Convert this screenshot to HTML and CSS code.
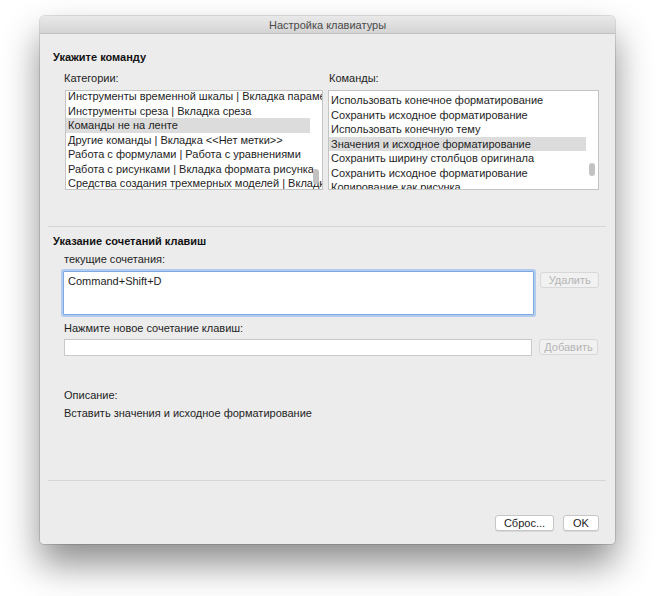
FILE: index.html
```html
<html>
<head>
	<title>Настройка клавиатуры</title>
	<meta charset="utf-8">
	<link rel="stylesheet" href="styles.css">
</head>
<body>
	<div class="window">
		<div class="titlebar">Настройка клавиатуры</div>
		<div class="content">
			<h2 class="group-title">Укажите команду</h2>
			<div class="lists">
				<div class="col col-cat">
					<div class="label">Категории:</div>
					<div class="listbox">
						<ul class="items items-cat">
							<li>Инструменты временной шкалы | Вкладка параметров</li>
							<li>Инструменты среза | Вкладка среза</li>
							<li class="selected">Команды не на ленте</li>
							<li>Другие команды | Вкладка &lt;&lt;Нет метки&gt;&gt;</li>
							<li>Работа с формулами | Работа с уравнениями</li>
							<li>Работа с рисунками | Вкладка формата рисунка</li>
							<li>Средства создания трехмерных моделей | Вкладка</li>
						</ul>
						<div class="thumb thumb-cat"></div>
					</div>
				</div>
				<div class="col col-cmd">
					<div class="label">Команды:</div>
					<div class="listbox">
						<ul class="items items-cmd">
							<li>Использовать конечное форматирование</li>
							<li>Сохранить исходное форматирование</li>
							<li>Использовать конечную тему</li>
							<li class="selected">Значения и исходное форматирование</li>
							<li>Сохранить ширину столбцов оригинала</li>
							<li>Сохранить исходное форматирование</li>
							<li>Копирование как рисунка</li>
						</ul>
						<div class="thumb thumb-cmd"></div>
					</div>
				</div>
			</div>

			<div class="separator sep-top"></div>

			<h2 class="group-title">Указание сочетаний клавиш</h2>
			<div class="label label-current">текущие сочетания:</div>
			<div class="field-row">
				<div class="keys">Command+Shift+D</div>
				<span class="btn btn-disabled btn-remove">Удалить</span>
			</div>
			<div class="label label-new">Нажмите новое сочетание клавиш:</div>
			<div class="field-row field-row-new">
				<div class="input"></div>
				<span class="btn btn-disabled">Добавить</span>
			</div>
			<div class="label label-desc">Описание:</div>
			<div class="label desc">Вставить значения и исходное форматирование</div>

			<div class="separator sep-bottom"></div>

			<div class="footer">
				<span class="btn btn-reset">Сброс...</span>
				<span class="btn btn-ok">OK</span>
			</div>
		</div>
	</div>
</body>
</html>
```

FILE: styles.css
```css
body {
	font-family: "Liberation Sans", Arial, sans-serif;
	font-size: 11px;
	color: #1e1e1e;
	background-color: #ffffff;
	margin: 0;
}
.window {
	width: 575px;
	height: 528px;
	margin: 16px 0 0 40px;
	background-color: #ececec;
	border-radius: 5px 5px 4px 4px;
	box-shadow: 0 0 0 1px rgba(0, 0, 0, 0.12), 0 20px 36px rgba(0, 0, 0, 0.45);
	overflow: hidden;
}
.titlebar {
	height: 17px;
	line-height: 18px;
	text-align: center;
	color: #4a4a4a;
	background: linear-gradient(#e9e9e9, #d4d4d4);
	border-bottom: 1px solid #c2c2c2;
}
.content {
	padding: 16px 16px 0 13px;
}
.group-title {
	font-size: 11px;
	font-weight: bold;
	line-height: 14px;
	margin: 0;
	color: #111;
}
.label {
	line-height: 14px;
	padding-left: 11px;
}
.lists {
	display: flex;
	gap: 5px;
	margin-top: 7px;
}
.col .label {
	margin-bottom: 5px;
}
.col-cat {
	width: 270px;
}
.col-cmd {
	width: 271px;
}
.col-cat .listbox {
	margin-left: 12px;
	width: 256px;
}
.col-cmd .label {
	padding-left: 1px;
}
.listbox {
	position: relative;
	height: 98px;
	background-color: #ffffff;
	border: 1px solid #c4c4c4;
	overflow: hidden;
}
.items {
	list-style: none;
	margin: 0;
	padding: 0;
}
.items li {
	height: 14.5px;
	line-height: 14.5px;
	padding-left: 2px;
	white-space: nowrap;
	overflow: hidden;
}
.items-cat {
	margin-top: -2px;
}
.items-cat li.selected {
	background: linear-gradient(to right, #dcdcdc calc(100% - 12px), transparent 0);
}
.items-cmd {
	margin-top: 2px;
	margin-right: 12px;
}
.items-cmd li.selected {
	background-color: #dcdcdc;
}
.thumb {
	position: absolute;
	right: 3px;
	width: 6px;
	height: 15px;
	border-radius: 3px;
	background-color: #c2c2c2;
}
.thumb-cat {
	top: 78px;
}
.thumb-cmd {
	top: 72px;
	height: 13px;
}
.separator {
	height: 1px;
	background-color: #d6d6d6;
	margin-left: -5px;
	margin-right: -7px;
}
.sep-top {
	margin-top: 36px;
	margin-bottom: 7px;
}
.label-current {
	margin-top: 4px;
}
.field-row {
	display: flex;
	align-items: flex-start;
	gap: 6px;
	margin-top: 5px;
	padding-left: 9px;
}
.keys {
	width: 469px;
	height: 39px;
	padding: 3px 0 0 4px;
	background-color: #ffffff;
	border: 1px solid #7ea9e4;
	box-shadow: 0 0 0 2px rgba(132, 178, 238, 0.55);
	border-radius: 1px;
	margin-left: 1px;
}
.btn {
	display: inline-block;
	box-sizing: border-box;
	height: 16px;
	line-height: 14px;
	text-align: center;
	border-radius: 3px;
}
.btn-disabled {
	width: 59px;
	color: #b4b4b4;
	background-color: #f1f1f1;
	border: 1px solid #d8d8d8;
}
.btn-remove {
	margin-top: 1px;
}
.label-new {
	margin-top: 6px;
}
.field-row-new {
	margin-top: 4px;
	gap: 7px;
}
.input {
	width: 466px;
	height: 15px;
	background-color: #ffffff;
	border: 1px solid #c9c9c9;
	margin-left: 2px;
}
.label-desc {
	margin-top: 32px;
}
.desc {
	margin-top: 4px;
}
.sep-bottom {
	margin-top: 60px;
}
.footer {
	display: flex;
	justify-content: flex-end;
	gap: 9px;
	margin-top: 34px;
}
.btn-reset,
.btn-ok {
	background-color: #ffffff;
	border: 1px solid #c6c6c6;
	box-shadow: 0 1px 0 rgba(0, 0, 0, 0.08);
	color: #222;
}
.btn-reset {
	width: 59px;
}
.btn-ok {
	width: 36px;
}
```
